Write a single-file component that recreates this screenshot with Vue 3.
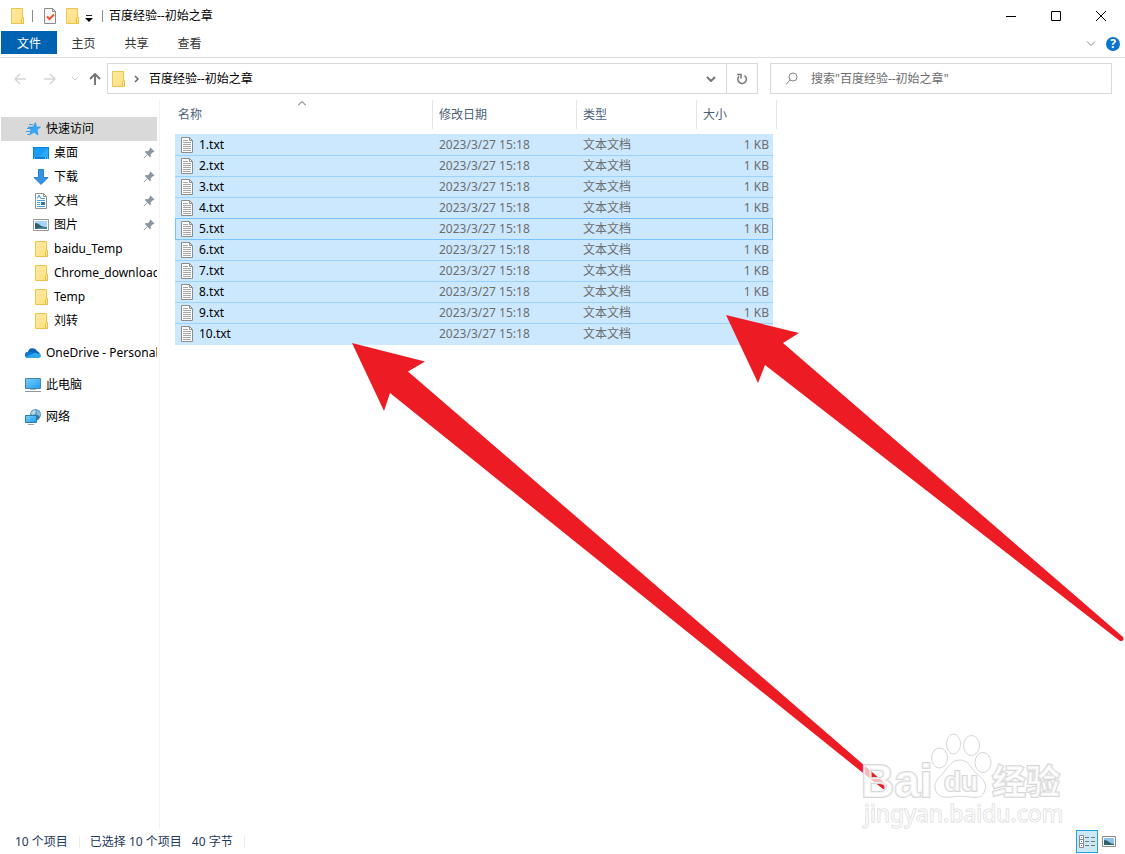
<script setup>
import { ref } from "vue";

const title = "百度经验--初始之章";
const keyword = ref("");
const tabs = ["主页", "共享", "查看"];
const current = ref("5.txt");

const quickItems = [
  { name: "桌面", icon: "desktop", pinned: true },
  { name: "下载", icon: "download", pinned: true },
  { name: "文档", icon: "document", pinned: true },
  { name: "图片", icon: "picture", pinned: true },
  { name: "baidu_Temp", icon: "folder" },
  { name: "Chrome_downloads", icon: "folder" },
  { name: "Temp", icon: "folder" },
  { name: "刘转", icon: "folder" },
];

const roots = [
  { name: "OneDrive - Personal", icon: "cloud" },
  { name: "此电脑", icon: "computer" },
  { name: "网络", icon: "network" },
];

const files = Array.from({ length: 10 }, (_, i) => ({
  name: i + 1 + ".txt",
  date: "2023/3/27 15:18",
  type: "文本文档",
  size: "1 KB",
}));

/**
 * Select the focused row
 */
const focusRow = (name) => {
  current.value = name;
};
</script>

<template>
  <div class="explorer">
    <!-- shared icons -->
    <svg class="sprite" aria-hidden="true">
      <defs>
        <linearGradient id="g-folder" x1="0" y1="0" x2="1" y2="1">
          <stop offset="0" stop-color="#ffe9a2" />
          <stop offset="1" stop-color="#ffdf80" />
        </linearGradient>
        <linearGradient id="g-screen" x1="0" y1="0" x2="1" y2="1">
          <stop offset="0" stop-color="#7cd0ff" />
          <stop offset="1" stop-color="#1e9cf5" />
        </linearGradient>
      </defs>
      <symbol id="i-folder" viewBox="0 0 16 16">
        <path d="M2.5.5h11v10h1v5h-12z" fill="url(#g-folder)" stroke="#ecc54f" />
        <path d="M12.5 15.5v-5l1-1h1v6z" fill="#ffe9a2" stroke="#e6bd45" />
      </symbol>
      <symbol id="i-desktop" viewBox="0 0 16 16">
        <path d="M0 2h16v12H0z" fill="#0a84d8" />
        <path d="M1 3h14v9H1z" fill="#1a9bf8" />
        <path d="M15 3v9H6z" fill="#2daaff" />
        <path d="M1 13h1M12 13h1M14 13h1" stroke="#d8f0ff" />
      </symbol>
      <symbol id="i-download" viewBox="0 0 16 16">
        <path d="M5.5.5h5v8h4.5L8 15.5 1 8.5h4.5z" fill="#3592e4" stroke="#2a7fcd" />
      </symbol>
      <symbol id="i-document" viewBox="0 0 16 16">
        <path d="M2.5.5h8l3 3v12h-11z" fill="#fff" stroke="#8f8f8f" />
        <path d="M10.5.5v3h3" fill="none" stroke="#8f8f8f" />
        <path d="M4.5 5.5l1-3h1l1 3" fill="none" stroke="#2f8cc9" />
        <path d="M8 5.5h4M4 7.5h8M4 9.5h3M4 11.5h3M4 13.5h8" stroke="#4ba0d8" />
        <path d="M8 9h4v3H8z" fill="#2f7ba5" />
      </symbol>
      <symbol id="i-picture" viewBox="0 0 16 16">
        <path d="M.5 2.5h15v11H.5z" fill="#fff" stroke="#999" />
        <path d="M2 4h12v8H2z" fill="#a8d4f8" />
        <path d="M2 6q3 0 5 2t7 2v2H2z" fill="#2f6264" />
        <path d="M7 10.5h7V12H2z" fill="#4a86b0" />
      </symbol>
      <symbol id="i-star" viewBox="0 0 16 16">
        <path
          d="M10.5 1.500l1 4.500H15.500l-3.300 2.800.8 5.200-4-2.800-4.500 2.800 1.500-5L3 6h5z"
          fill="#35a6f5"
          stroke="#2b8fd8"
          stroke-width=".6"
        />
        <path d="M4 3.500h4M2 7.500h3M1 10.500h4M2 13.500h2" stroke="#3f9fe4" />
      </symbol>
      <symbol id="i-cloud" viewBox="0 0 16 16">
        <path d="M3 13a3 3 0 0 1 0-6 4.800 4.800 0 0 1 9-1q2 .3 3 3l-5 4z" fill="#0364b8" />
        <path d="M0 10q0-3 3.500-3.300Q5 6 7 7l7 5H3q-3 0-3-2z" fill="#0f78d4" />
        <path d="M1 12l8-4q1.500-1 3 .2 4 0 4 2.800 0 2-2.500 2H3q-1.500 0-2-1z" fill="#28a8ea" />
      </symbol>
      <symbol id="i-computer" viewBox="0 0 16 16">
        <path d="M.5 1.5h15v10H.5z" fill="url(#g-screen)" stroke="#4787a8" />
        <path d="M5 12.5h6" stroke="#aab8c2" />
        <path d="M0 14.5h16" stroke="#8c9aa5" />
      </symbol>
      <symbol id="i-network" viewBox="0 0 16 16">
        <circle cx="10.5" cy="5.5" r="5.5" fill="#5f9cbd" />
        <path d="M6 4l3-3 2 1-1 3-3 1z" fill="#b8dcec" />
        <path d="M12 1l3 3v3l-3-2z" fill="#8dc0da" />
        <path d="M12 6l3 2-2 3h-2z" fill="#3c7696" />
        <path d="M.5 6.5h11v7H.5z" fill="url(#g-screen)" stroke="#2a7cad" />
        <path d="M3 15.5h6" stroke="#93a6b3" />
      </symbol>
      <symbol id="i-pin" viewBox="0 0 12 12">
        <path d="M7.5.5l4 4-1 .8-.7-.1-2 2 .1 2-1 1L1.800 5.100l1-1 2 .1 2-2-.1-.8z" fill="#8b98a3" />
        <path d="M4.300 7.700L.8 11.200" stroke="#8b98a3" />
      </symbol>
      <symbol id="i-text" viewBox="0 0 12 16">
        <path d="M.5.5h8l3 3v12H.5z" fill="#fff" stroke="#8c8c8c" />
        <path d="M8.5.5v3h3" fill="none" stroke="#8c8c8c" />
        <path d="M2 3.5h5M2 5.5h8M2 7.5h8M2 9.5h8M2 11.5h8M2 13.5h8" stroke="#a6a6a6" />
      </symbol>
    </svg>

    <header class="title-bar">
      <svg class="icon"><use href="#i-folder" /></svg>
      <span class="split"></span>
      <button class="quick-btn" aria-label="属性">
        <svg class="icon" viewBox="0 0 16 16">
          <path d="M2.5.5h8l3 3v12h-11z" fill="#f7f7f7" stroke="#8a8a8a" />
          <path d="M10.5.5v3h3" fill="none" stroke="#8a8a8a" />
          <path d="M5 8.500l2.500 2.500L12 6.500" fill="none" stroke="#e8562a" stroke-width="2" />
        </svg>
      </button>
      <button class="quick-btn" aria-label="新建文件夹">
        <svg class="icon"><use href="#i-folder" /></svg>
      </button>
      <button class="quick-btn narrow" aria-label="自定义快速访问工具栏">
        <svg width="8" height="8" viewBox="0 0 8 8">
          <path d="M1 1.5h6" stroke="#222" />
          <path d="M0 4h8L4 8z" fill="#000" />
        </svg>
      </button>
      <span class="split"></span>
      <h1 class="title">{{ title }}</h1>
      <div class="window-btns">
        <button aria-label="最小化">
          <svg width="10" height="10"><path d="M0 5.5h10" stroke="#000" /></svg>
        </button>
        <button aria-label="最大化">
          <svg width="10" height="10"><path d="M.5.5h9v9h-9z" fill="none" stroke="#000" /></svg>
        </button>
        <button aria-label="关闭">
          <svg width="10" height="10"><path d="M0 0l10 10M10 0L0 10" stroke="#000" /></svg>
        </button>
      </div>
    </header>

    <nav class="ribbon">
      <button class="tab file-tab">文件</button>
      <button v-for="tab in tabs" :key="tab" class="tab">{{ tab }}</button>
      <div class="ribbon-right">
        <button aria-label="展开功能区">
          <svg width="10" height="6"><path d="M1 .5l4 4 4-4" fill="none" stroke="#888" /></svg>
        </button>
        <button class="help" aria-label="帮助">?</button>
      </div>
    </nav>

    <div class="address-row">
      <div class="arrows">
        <button aria-label="后退">
          <svg width="12" height="12">
            <path d="M12 6H1M6 1L1 6l5 5" fill="none" stroke="#d5d5d5" stroke-width="1.5" />
          </svg>
        </button>
        <button aria-label="前进">
          <svg width="12" height="12">
            <path d="M0 6h11M6 1l5 5-5 5" fill="none" stroke="#d5d5d5" stroke-width="1.5" />
          </svg>
        </button>
        <button class="slim" aria-label="最近浏览的位置">
          <svg width="6" height="4"><path d="M0 0l3 3 3-3" fill="none" stroke="#ccc" /></svg>
        </button>
        <button class="slim" aria-label="上移">
          <svg width="12" height="12">
            <path d="M6 12V1M1 6l5-5 5 5" fill="none" stroke="#777" stroke-width="2" />
          </svg>
        </button>
      </div>
      <div class="address">
        <svg class="icon"><use href="#i-folder" /></svg>
        <svg class="crumb-arrow" width="5" height="8">
          <path d="M1 1l3 3-3 3" fill="none" stroke="#666" stroke-width="1.5" />
        </svg>
        <a href="#" class="crumb" @click.prevent>{{ title }}</a>
        <button class="drop" aria-label="以前的位置">
          <svg width="10" height="6">
            <path d="M1 1l4 4 4-4" fill="none" stroke="#777" stroke-width="2" />
          </svg>
        </button>
        <button class="refresh" aria-label="刷新">
          <svg width="12" height="12">
            <path
              d="M8.5 2.600A4.300 4.300 0 1 1 3 3.200M1 1.5h4v4"
              fill="none"
              stroke="#777"
              stroke-width="1.5"
            />
          </svg>
        </button>
      </div>
      <label class="search">
        <svg width="14" height="14">
          <circle cx="8" cy="5" r="4" fill="none" stroke="#858585" />
          <path d="M5 8L1 12.5" stroke="#858585" />
        </svg>
        <input
          v-model="keyword"
          type="text"
          aria-label="搜索"
          :placeholder="'搜索&quot;' + title + '&quot;'"
        />
      </label>
    </div>

    <div class="body">
      <aside class="sidebar">
        <a href="#" class="node root active" @click.prevent>
          <svg class="icon"><use href="#i-star" /></svg>
          <span>快速访问</span>
        </a>
        <a v-for="item in quickItems" :key="item.name" href="#" class="node" @click.prevent>
          <svg class="icon"><use :href="'#i-' + item.icon" /></svg>
          <span>{{ item.name }}</span>
          <svg v-if="item.pinned" class="pin"><use href="#i-pin" /></svg>
        </a>
        <a
          v-for="item in roots"
          :key="item.name"
          href="#"
          class="node root spaced"
          @click.prevent
        >
          <svg class="icon"><use :href="'#i-' + item.icon" /></svg>
          <span>{{ item.name }}</span>
        </a>
      </aside>

      <main class="list">
        <table>
          <colgroup>
            <col class="col-name" />
            <col class="col-date" />
            <col class="col-type" />
            <col class="col-size" />
            <col class="col-edge" />
          </colgroup>
          <thead>
            <tr>
              <th scope="col">
                <div class="head">
                  名称
                  <svg class="sort" width="8" height="5">
                    <path d="M0 4.5l4-4 4 4" fill="none" stroke="#555" />
                  </svg>
                </div>
              </th>
              <th scope="col"><div class="head">修改日期</div></th>
              <th scope="col"><div class="head">类型</div></th>
              <th scope="col" colspan="2"><div class="head">大小</div></th>
            </tr>
          </thead>
          <tbody>
            <tr
              v-for="file in files"
              :key="file.name"
              :class="{ current: file.name === current }"
              @click="focusRow(file.name)"
            >
              <td>
                <div class="file-name">
                  <svg width="12" height="16"><use href="#i-text" /></svg>
                  {{ file.name }}
                </div>
              </td>
              <td>{{ file.date }}</td>
              <td>{{ file.type }}</td>
              <td class="size">{{ file.size }}</td>
            </tr>
          </tbody>
        </table>
      </main>
    </div>

    <footer class="status">
      <span class="count">10 个项目</span>
      <div class="chosen">
        <span>已选择 10 个项目</span>
        <span>40 字节</span>
      </div>
      <div class="views">
        <button class="view on" aria-label="详细信息">
          <svg width="16" height="14">
            <path d="M.5.5h4v12h-4zM.5 4.5h4M.5 8.5h4" fill="#fff" stroke="#8a8a8a" />
            <path d="M2 2.5h1M2 6.5h1" stroke="#3b78b5" />
            <path d="M2 10.5h1" stroke="#c33" />
            <path d="M6 2.5h4M12 2.5h4M6 6.5h4M12 6.5h4M6 10.5h4M12 10.5h4" stroke="#777" />
          </svg>
        </button>
        <button class="view" aria-label="大图标">
          <svg width="14" height="11">
            <path d="M.5.5h13v10H.5z" fill="#fff" stroke="#888" />
            <path d="M2 2h10v7H2z" fill="#8fc1f5" />
            <path d="M2 4q3 0 5 2t5 2v1H2z" fill="#2f6264" />
          </svg>
        </button>
      </div>
    </footer>

    <svg class="marks" width="1125" height="854" viewBox="0 0 1125 854" aria-hidden="true">
      <g fill="#ed1c24">
        <path d="M352 343l73 18.500-17 10L887 785q1 5-4 4L390 393l-6 18z" />
        <path d="M726 315l73 18-16 10 340 294q2 4-3 4L765 365l-7 18z" />
      </g>
      <g class="brand" fill="#fff" fill-opacity=".7" stroke="#d6d6d6">
        <text class="latin" x="861" y="797" font-size="46">Bai</text>
        <ellipse cx="953.5" cy="744" rx="7" ry="10" />
        <ellipse cx="971.5" cy="745.5" rx="8" ry="10" />
        <ellipse cx="939.5" cy="758" rx="8" ry="10" />
        <ellipse cx="983" cy="762.5" rx="8" ry="10" />
        <path
          d="M960 760c8 0 11 8 16 13 7 6 11 10 9 17-2 8-8 8-15 7-6-1-12-1-19 0-8 1-15-1-16-9-1-7 5-11 9-16 5-6 8-12 16-12z"
        />
        <text class="latin" x="944" y="791" font-size="28">du</text>
        <text class="han" x="992" y="794" font-size="34">经验</text>
        <text class="url" x="864" y="822" font-size="23">jingyan.baidu.com</text>
      </g>
    </svg>
  </div>
</template>

<style>
body {
  margin: 0;
  background: #fff;
}
</style>

<style scoped>
.explorer {
  position: relative;
  display: flex;
  flex-direction: column;
  min-height: 100vh;
  overflow: hidden;
  background: #fff;
  color: #000;
  font-family: "Noto Sans", "Noto Sans CJK SC", sans-serif;
  font-size: 12px;
  line-height: 16px;
}

.explorer * {
  box-sizing: border-box;
}

.sprite {
  position: absolute;
  width: 0;
  height: 0;
}

svg {
  display: block;
  flex: none;
}

button {
  display: flex;
  align-items: center;
  justify-content: center;
  padding: 0;
  border: 0;
  background: none;
  color: inherit;
  font: inherit;
}

a {
  color: inherit;
  text-decoration: none;
}

.icon {
  width: 16px;
  height: 16px;
}

/* title bar */
.title-bar {
  display: flex;
  align-items: center;
  height: 31px;
  padding: 0 2px 0 9px;
}

.split {
  width: 1px;
  height: 12px;
  margin: 0 6px 0 7px;
  background: #8c8c8c;
}

.quick-btn {
  width: 22px;
  height: 22px;
}

.quick-btn.narrow {
  width: 12px;
  padding-top: 4px;
}

.title {
  margin: 0;
  font-size: 12px;
  font-weight: 400;
}

.window-btns {
  display: flex;
  margin-left: auto;
}

.window-btns button {
  width: 45px;
  height: 30px;
}

/* ribbon */
.ribbon {
  display: flex;
  align-items: flex-start;
  height: 27px;
  padding-left: 1px;
  border-bottom: 1px solid #dadbdc;
}

.tab {
  width: 53px;
  height: 23px;
  padding-top: 2px;
  color: #333;
}

.file-tab {
  width: 56px;
  background: #0063b1;
  color: #fff;
}

.ribbon-right {
  display: flex;
  align-items: center;
  gap: 10px;
  height: 26px;
  margin-left: auto;
  padding-right: 5px;
}

.help {
  width: 14px;
  height: 14px;
  border-radius: 50%;
  background: #0a74d1;
  color: #fff;
  font-weight: 700;
}

/* address row */
.address-row {
  display: grid;
  grid-template-columns: 107px minmax(0, 651fr) 12px minmax(0, 342fr);
  padding: 5px 13px 0 0;
}

.arrows {
  display: flex;
  align-items: center;
  padding-left: 5px;
}

.arrows button {
  width: 30px;
  height: 30px;
}

.arrows .slim {
  width: 20px;
}

.address {
  display: flex;
  align-items: center;
  height: 31px;
  padding-left: 2px;
  border: 1px solid #d9d9d9;
}

.crumb-arrow {
  margin: 0 10px 0 8px;
}

.drop {
  width: 30px;
  height: 29px;
  margin-left: auto;
}

.refresh {
  width: 31px;
  height: 29px;
  border-left: 1px solid #d9d9d9;
}

.search {
  display: flex;
  grid-column: 4;
  align-items: center;
  gap: 12px;
  height: 31px;
  padding: 0 14px;
  border: 1px solid #d9d9d9;
}

.search input {
  flex: 1;
  min-width: 0;
  padding: 0;
  border: 0;
  outline: 0;
  background: none;
  font: inherit;
}

.search input::placeholder {
  color: #6d6d6d;
  opacity: 1;
}

/* body */
.body {
  display: flex;
  flex: 1;
  padding-top: 6px;
}

.sidebar {
  flex: none;
  width: 160px;
  padding: 17px 2px 0 1px;
  border-right: 1px solid #f3f3f3;
}

.node {
  display: flex;
  align-items: center;
  gap: 5px;
  height: 24px;
  padding-left: 32px;
  overflow: hidden;
  white-space: nowrap;
}

.node.root {
  padding-left: 24px;
}

.node.active {
  background: #d9d9d9;
}

.node.spaced {
  margin-top: 8px;
}

.pin {
  width: 12px;
  height: 12px;
  margin: 0 2px 0 auto;
}

.list {
  flex: 1;
  min-width: 0;
  padding-left: 15px;
}

table {
  width: 602px;
  table-layout: fixed;
  border-collapse: separate;
  border-spacing: 0;
}

.col-name {
  width: 258px;
}

.col-date {
  width: 144px;
}

.col-type {
  width: 120px;
}

.col-size {
  width: 76px;
}

.col-edge {
  width: 4px;
}

th {
  height: 34px;
  padding: 0;
  color: #4c607a;
  font-weight: 400;
  text-align: left;
  vertical-align: top;
}

.head {
  position: relative;
  height: 29px;
  padding: 7px 0 0 6px;
  border-right: 1px solid #e5e5e5;
}

th:first-child .head {
  padding-left: 3px;
}

.sort {
  position: absolute;
  top: 1px;
  left: calc(50% - 6px);
}

td {
  height: 21px;
  padding: 0 0 1px 6px;
  border-top: 1px solid #99d1ff;
  background: #cce8ff;
  color: #6d6d6d;
  line-height: 19px;
}

td:first-child {
  color: #000;
}

tr:first-child td {
  border-top-color: #cce8ff;
}

tr:last-child td {
  height: 22px;
  padding-bottom: 2px;
}

td.size {
  padding-right: 4px;
  text-align: right;
}

.current td,
.current + tr td {
  border-top-color: #7ac1ff;
}

.current td:first-child {
  border-left: 1px solid #7ac1ff;
  padding-left: 5px;
}

.current td.size {
  border-right: 1px solid #7ac1ff;
  padding-right: 3px;
}

.file-name {
  display: flex;
  align-items: center;
  gap: 6px;
}

/* status bar */
.status {
  display: flex;
  align-items: center;
  height: 25px;
  padding: 0 5px 0 15px;
  color: #1e395b;
}

.count,
.chosen {
  padding-right: 11px;
  border-right: 1px solid #ececec;
  line-height: 12px;
}

.chosen {
  display: flex;
  gap: 10px;
  padding-left: 10px;
}

.views {
  display: flex;
  margin-left: auto;
}

.view {
  width: 22px;
  height: 23px;
}

.view.on {
  border: 1px solid #26a0da;
  background: #cbe8f6;
}

/* red pointers and watermark lie over the window */
.marks {
  position: absolute;
  top: 0;
  left: 0;
  pointer-events: none;
}

.brand text {
  paint-order: stroke;
  stroke-width: 2px;
}

.brand .url {
  stroke-width: 1px;
}

.latin {
  font-family: "Liberation Sans", Arial, sans-serif;
  font-weight: 700;
}

.han {
  font-family: "Noto Sans CJK SC", sans-serif;
  font-weight: 700;
}

.url {
  font-family: "Noto Sans", sans-serif;
}
</style>
